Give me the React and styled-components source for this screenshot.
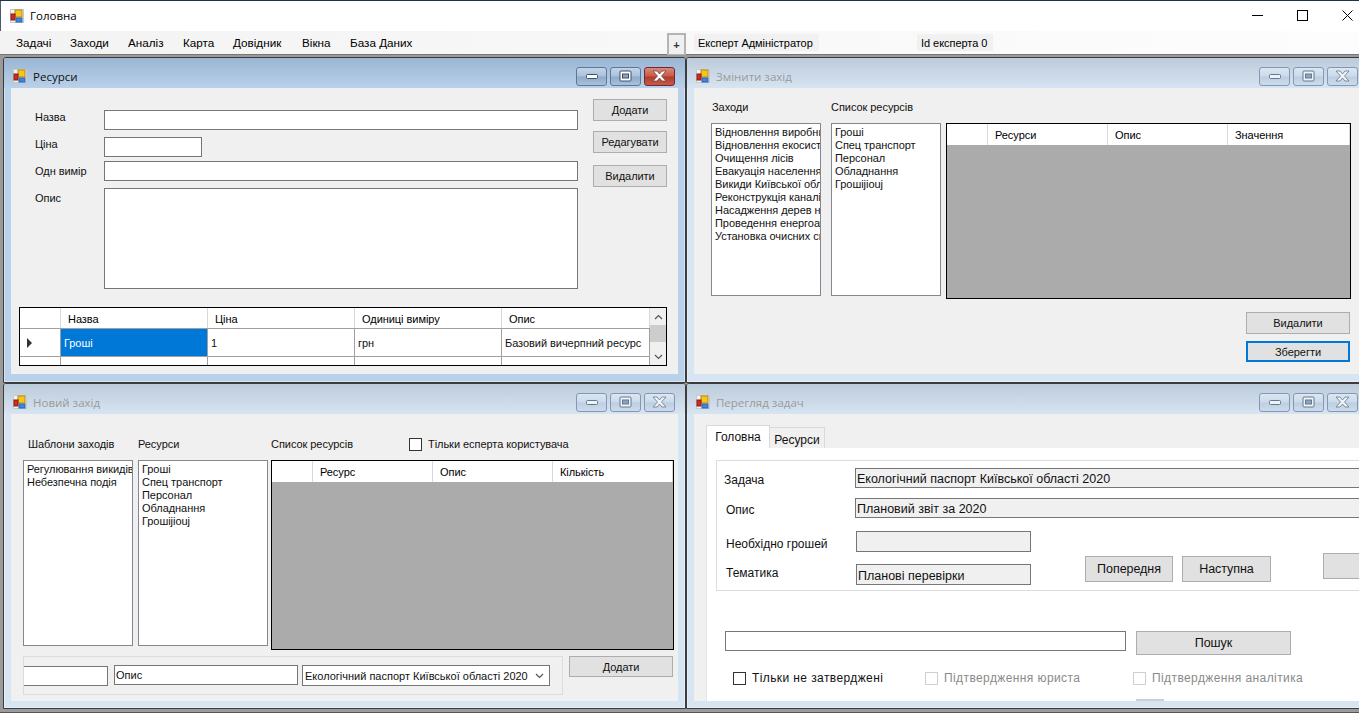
import React from "react";
import styled, { createGlobalStyle } from "styled-components";

const Global = createGlobalStyle`
  html, body { margin: 0; padding: 0; width: 1359px; height: 713px; overflow: hidden; background: #ababab; }
  * { box-sizing: border-box; }
  body { font-family: "Liberation Sans", Arial, sans-serif; font-size: 11px; color: #000; }
`;

const Shell = styled.div`
  width: 1359px; height: 713px; overflow: hidden; display: flex; flex-direction: column;
  border-top: 1px solid #1f3350;
`;
const TitleBar = styled.div`
  height: 30px; background: #fff; display: flex; align-items: center; padding-left: 9px;
  border-left: 1px solid #4a5a70; font-family: "Open Sans", sans-serif; font-size: 11.5px;
`;
const TitleText = styled.span` margin-left: 6px; margin-top: -1px; `;
const SysButtons = styled.div` margin-left: auto; display: flex; margin-right: -11px; margin-top: -2px; `;
const SysButton = styled.div` width: 45px; height: 30px; display: flex; align-items: center; justify-content: center; `;
const MenuBar = styled.div`
  height: 24px; display: flex; align-items: flex-start; padding-left: 16px;
  background: linear-gradient(90deg, #f3f3f3, #fdfdfd); border-bottom: 1px solid #777;
`;
const Menu = styled.div` display: flex; width: 651px; `;
const MenuItem = styled.div`
  width: ${p => p.$w}px; line-height: 24px; font-size: 11.7px; white-space: nowrap;
`;
const PlusButton = styled.div`
  width: 19px; height: 23px; margin-top: 2px; border: 2px solid #b4b4b4; background: #f0f0f0;
  display: flex; align-items: center; justify-content: center; font-size: 11px; font-weight: 700; color: #333;
`;
const StatusLabel = styled.div`
  margin-left: ${p => p.$ml}px; margin-top: 3px; height: 17px; padding: 0 4px; line-height: 18px;
  width: ${p => p.$w}px; background: #f1f1f1; font-size: 11px; letter-spacing: -.05px; white-space: nowrap;
`;
const Desktop = styled.div`
  flex: 1; display: grid; grid-template-columns: 683px 683px; grid-template-rows: 326px 326px;
  padding: 2px 0 0 3px; background: #9a9a9a; align-content: start; overflow: hidden;
  border-bottom: 1px solid #555;
`;
const Win = styled.section`
  display: flex; flex-direction: column; overflow: hidden; border: 1px solid #3c3c3c; border-radius: 3px 3px 0 0;
  background: ${p => (p.$active ? "#b9d1ea" : "#d7e4f2")};
  box-shadow: inset 0 0 0 1px ${p => (p.$active ? "#d5e4f4" : "#e6eef7")};
`;
const WinHead = styled.header`
  height: 30px; flex: none; display: flex; align-items: center; padding: 6px 10px 0 9px;
  background: linear-gradient(180deg, ${p => (p.$active ? "#9ab5d3, #b9d1ea" : "#bccbda, #d7e4f2")});
  font-family: "Open Sans", sans-serif; font-size: 11.5px; color: ${p => (p.$active ? "#111" : "#9a9a9a")};
`;
const WinTitle = styled.span` margin-left: 6px; `;
const WinButtons = styled.div` margin-left: auto; display: flex; gap: 3px; `;
const WinBtn = styled.div`
  width: 31px; height: 19px; border-radius: 3px; display: flex; align-items: center; justify-content: center;
  border: 1px solid ${p => (p.$red ? "#6e2a34" : p.$active ? "#5f7896" : "#8398b4")};
  background: ${p => (p.$red
    ? "linear-gradient(180deg,#d98a78 0,#c65a48 48%,#b03a2a 52%,#c65a4a 100%)"
    : p.$active
      ? "linear-gradient(180deg,#c2d4e8 0,#aac2dc 48%,#8fabc9 52%,#a8c0da 100%)"
      : "linear-gradient(180deg,#dbe6f1 0,#ccdaea 48%,#bccee2 52%,#cddcec 100%)")};
`;
const Client = styled.div`
  margin: 0 7px; height: ${p => p.$h}px; background: #f0f0f0; overflow: hidden;
`;

const Label = styled.div`
  line-height: 14px; font-size: 11px; letter-spacing: -.05px; white-space: nowrap; color: #111;
  margin-left: ${p => p.$ml || 0}px; margin-top: ${p => p.$mt || 0}px; width: ${p => (p.$w ? p.$w + "px" : "auto")};
`;
const TextBox = styled.input`
  display: block; flex: none; width: ${p => p.$w}px; height: ${p => p.$h || 20}px; padding: 1px 1px;
  margin-top: ${p => p.$mt || 0}px; border: 1px solid #767676; border-radius: 0; outline: none;
  background: ${p => (p.$ro ? "#f0f0f0" : "#fff")}; color: #111;
  font-family: "Liberation Sans", sans-serif; font-size: ${p => p.$fs || 11}px;
`;
const ClippedBox = styled(TextBox)` border-left: none; margin-left: -1px; `;
const DescBox = styled(TextBox)` margin-left: 6px; `;
const LoweredBox = styled(TextBox)` padding-top: 3px; `;
const Memo = styled.textarea`
  display: block; flex: none; width: ${p => p.$w}px; height: ${p => p.$h}px; border: 1px solid #767676;
  border-radius: 0; resize: none; background: #fff; outline: none;
`;
const Btn = styled.button`
  display: block; flex: none; width: ${p => p.$w}px; height: ${p => p.$h || 22}px; padding: 0;
  margin-top: ${p => p.$mt || 0}px; margin-left: ${p => p.$ml || 0}px;
  background: #e1e1e1; border: ${p => (p.$focus ? "2px solid #0078d7" : "1px solid #adadad")}; border-radius: 0;
  font-family: "Liberation Sans", sans-serif; font-size: ${p => p.$fs || 11}px; letter-spacing: -.05px; color: #111;
`;

/* grid control */
const Grid = styled.div`
  flex: none; width: ${p => p.$w}px; height: ${p => p.$h}px; border: 1px solid #000;
  background: ${p => p.$bg || "#ababab"}; overflow: hidden; position: relative;
`;
const GridRow = styled.div`
  display: grid; grid-template-columns: ${p => p.$cols}; height: ${p => p.$h}px; background: #fff;
  border-bottom: ${p => (p.$noline ? "none" : "1px solid #a0a0a0")};
`;
const HeadCell = styled.div`
  border-right: 1px solid #d9d9d9; padding-left: 7px; line-height: 22px; font-size: 11px; letter-spacing: -.05px; white-space: nowrap; overflow: hidden;
`;
const Cell = styled.div`
  border-right: 1px solid #a0a0a0; padding-left: 3px; display: flex; align-items: center; font-size: 11px; letter-spacing: -.05px; white-space: nowrap;
  overflow: hidden; background: ${p => (p.$sel ? "#0078d7" : "#fff")}; color: ${p => (p.$sel ? "#fff" : "#111")};
`;
const RowHead = styled.div`
  border-right: 1px solid #a0a0a0; display: flex; align-items: center; padding-left: 7px;
`;
const Arrow = styled.div`
  width: 0; height: 0; border-left: 5px solid #333; border-top: 5px solid transparent; border-bottom: 5px solid transparent;
`;
const ScrollBar = styled.div`
  position: absolute; right: 0; top: 0; bottom: 0; width: 16px; background: #f0f0f0;
  display: flex; flex-direction: column; align-items: center;
`;
const ScrollEnd = styled.div` height: 17px; display: flex; align-items: center; justify-content: center; flex: none; `;
const ScrollThumb = styled.div` width: 16px; height: 17px; background: #cdcdcd; `;
const ScrollFill = styled.div` flex: 1; `;

const ListBox = styled.div`
  flex: none; width: ${p => p.$w}px; height: ${p => p.$h}px; border: 1px solid #828790; background: #fff;
  padding: 2px 0 0 3px; overflow: hidden; font-size: 11px; letter-spacing: -.05px; line-height: 13px; white-space: nowrap; color: #111;
`;
const CheckBox = styled.span`
  display: inline-block; flex: none; width: 13px; height: 13px; background: #fff;
  border: 1px solid ${p => (p.$off ? "#cfcfcf" : "#333")};
`;
const CheckRow = styled.div` display: flex; align-items: center; gap: 6px; `;

/* Resources window */
const ResBody = styled.div` padding: 11px 11px 0 8px; `;
const ResTop = styled.div` display: flex; height: 208px; `;
const Fields = styled.div` width: 559px; padding: 11px 0 0 16px; `;
const FieldRow = styled.div` display: flex; margin-top: ${p => p.$mt || 0}px; `;
const SideButtons = styled.div` margin-left: 15px; width: 74px; `;

/* Edit window */
const EditBody = styled.div` padding: 12px 8px 0 17px; display: flex; flex-direction: column; `;
const Columns = styled.div` display: flex; `;
const Col = styled.div` flex: none; margin-left: ${p => p.$ml || 0}px; `;
const ColHead = styled.div` height: 23px; display: flex; align-items: flex-start; `;
const ActionStack = styled.div` align-self: flex-end; margin-top: 13px; margin-right: 3px; `;

/* New window */
const NewBody = styled.div` padding: 23px 0 0 12px; `;
const BottomRow = styled.div` display: flex; margin-top: 6px; align-items: flex-start; `;
const BottomGroup = styled.div`
  width: 540px; height: 39px; border: 1px solid #dcdcdc; display: flex; align-items: flex-start;
  overflow: hidden; margin-right: 6px;
`;
const Combo = styled.div`
  flex: none; width: 248px; height: 21px; margin: 8px 0 0 4px; border: 1px solid #767676; background: #fff;
  display: flex; align-items: center; justify-content: space-between; padding: 0 5px 0 2px; font-size: 11px; white-space: nowrap; color: #111;
`;

/* Tasks window */
const TaskBody = styled.div` padding: 11px 0 0 12px; height: 100%; display: flex; flex-direction: column; `;
const Tabs = styled.div` display: flex; align-items: flex-end; height: 23px; flex: none; `;
const Tab = styled.div`
  height: ${p => (p.$on ? 23 : 21)}px; width: ${p => p.$w}px; text-align: center; font-size: 12px;
  background: ${p => (p.$on ? "#fff" : "#f0f0f0")}; border: 1px solid #d9d9d9; border-bottom: none;
  border-left: ${p => (p.$on ? "1px solid #d9d9d9" : "none")}; line-height: ${p => (p.$on ? 22 : 24)}px; color: #111;
`;
const TabPage = styled.div`
  flex: 1; background: #fff; padding: 12px 0 0 9px; border-left: 1px solid #e4e4e4; overflow: hidden; font-size: 13px;
`;
const TaskGroup = styled.div`
  height: 131px; width: 700px; border: 1px solid #dcdcdc; padding: 7px 0 0 7px;
`;
const TaskRow = styled.div` display: flex; margin-top: ${p => p.$mt || 0}px; `;
const TaskLabel = styled.div`
  flex: none; width: ${p => p.$w}px; margin-left: ${p => p.$ml || 0}px; margin-top: ${p => p.$mt || 0}px;
  font-size: 12px; line-height: 16px; white-space: nowrap; color: #111;
`;
const TaskLower = styled.div` display: flex; margin-top: 13px; `;
const TaskLeft = styled.div` flex: none; width: 307px; `;
const TaskActions = styled.div` display: flex; margin: 25px 0 0 54px; align-items: flex-start; gap: 9px; `;
const SearchRow = styled.div` display: flex; margin: 40px 0 0 9px; gap: 10px; align-items: flex-start; `;
const ChecksRow = styled.div` display: flex; margin: 15px 0 0 17px; font-size: 12px; height: 16px; align-items: center; `;
const TaskCheck = styled(CheckRow)`
  width: ${p => p.$w}px; color: ${p => (p.$off ? "#8a8a8a" : "#111")}; white-space: nowrap; letter-spacing: .4px;
`;
const CutButton = styled.div` width: 28px; height: 10px; margin: 13px 0 0 420px; background: #cfcfcf; `;

const AppIcon = () => (
  <svg width="14" height="14" viewBox="0 0 14 14" style={{ flex: "none" }}>
    <rect x="0.5" y="0.5" width="13" height="13" fill="#f3f3f3" stroke="#c9c9c9" />
    <rect x="5" y="1" width="7" height="7" fill="#f6c51e" stroke="#b68a10" />
    <rect x="1" y="5" width="4" height="6" fill="#d32a1e" stroke="#8c1c14" />
    <rect x="6" y="9" width="6" height="4" fill="#3f86e0" stroke="#2a62b0" />
  </svg>
);

const WinControls = ({ active }) => {
  const c = active ? "#fff" : "#eef3f8";
  const s = active ? "#3d4f68" : "#66788f";
  return (
    <WinButtons>
      <WinBtn $active={active}>
        <svg width="12" height="7"><rect x=".5" y="1.5" width="11" height="4" rx="1" fill={c} stroke={s} /></svg>
      </WinBtn>
      <WinBtn $active={active}>
        <svg width="13" height="12"><rect x="1" y="1" width="11" height="10" rx="1" fill={c} stroke={s} /><rect x="3.5" y="4" width="6" height="4" fill="#8aa4c4" stroke={s} /></svg>
      </WinBtn>
      <WinBtn $active={active} $red={active}>
        <svg width="17" height="12" viewBox="0 0 17 12">
          <path d="M2 1h4l2.5 3L11 1h4l-4.5 5 4.5 5h-4L8.5 8 6 11H2l4.5-5z" fill={c} stroke={active ? "#6e4a4a" : s} strokeWidth=".8" />
        </svg>
      </WinBtn>
    </WinButtons>
  );
};

const Window = ({ title, active, clientH, children }) => (
  <Win $active={active}>
    <WinHead $active={active}>
      <AppIcon />
      <WinTitle>{title}</WinTitle>
      <WinControls active={active} />
    </WinHead>
    <Client $h={clientH}>{children}</Client>
  </Win>
);

const Chevron = ({ color = "#555", up }) => (
  <svg width="9" height="6" viewBox="0 0 9 6">
    <path d={up ? "M1 5l3.5-3.5L8 5" : "M1 1l3.5 3.5L8 1"} fill="none" stroke={color} strokeWidth="1.2" />
  </svg>
);

const resCols = "41px 147px 147px 147px 148px 1fr";
const activities = ["Відновлення виробниц", "Відновлення екосисте", "Очищення лісів", "Евакуація населення", "Викиди Київської обл", "Реконструкція каналі", "Насадження дерев на", "Проведення енергоау", "Установка очисних сп"];
const resources = ["Гроші", "Спец транспорт", "Персонал", "Обладнання", "Грошіјіоuј"];

const Lines = ({ items }) => items.map(t => <div key={t}>{t}</div>);

const EmptyGrid = ({ w, h, cols, heads }) => (
  <Grid $w={w} $h={h}>
    <GridRow $cols={cols} $h={21} $noline>
      <HeadCell />
      {heads.map(t => <HeadCell key={t}>{t}</HeadCell>)}
    </GridRow>
  </Grid>
);

export default function App() {
  return (
    <Shell>
      <Global />
      <TitleBar>
        <AppIcon />
        <TitleText>Головна</TitleText>
        <SysButtons>
          <SysButton><svg width="11" height="11"><path d="M0 5.5h11" stroke="#000" /></svg></SysButton>
          <SysButton><svg width="11" height="11"><rect x=".5" y=".5" width="10" height="10" fill="none" stroke="#000" /></svg></SysButton>
          <SysButton><svg width="11" height="11"><path d="M.5.5l10 10M10.5.5l-10 10" stroke="#000" /></svg></SysButton>
        </SysButtons>
      </TitleBar>
      <MenuBar>
        <Menu>
          <MenuItem $w={54}>Задачі</MenuItem>
          <MenuItem $w={58}>Заходи</MenuItem>
          <MenuItem $w={55}>Аналіз</MenuItem>
          <MenuItem $w={50}>Карта</MenuItem>
          <MenuItem $w={69}>Довідник</MenuItem>
          <MenuItem $w={48}>Вікна</MenuItem>
          <MenuItem $w={70}>База Даних</MenuItem>
        </Menu>
        <PlusButton>+</PlusButton>
        <StatusLabel $ml={8} $w={125}>Експерт Адміністратор</StatusLabel>
        <StatusLabel $ml={98} $w={76}>Id експерта 0</StatusLabel>
      </MenuBar>
      <Desktop>
        <Window title="Ресурси" active clientH={286}>
          <ResBody>
            <ResTop>
              <Fields>
                <FieldRow><Label $w={69}>Назва</Label><TextBox $w={474} /></FieldRow>
                <FieldRow $mt={7}><Label $w={69}>Ціна</Label><TextBox $w={98} /></FieldRow>
                <FieldRow $mt={4}><Label $w={69} $mt={3}>Одн вимір</Label><TextBox $w={474} /></FieldRow>
                <FieldRow $mt={7}><Label $w={69} $mt={3}>Опис</Label><Memo $w={474} $h={101} /></FieldRow>
              </Fields>
              <SideButtons>
                <Btn $w={74}>Додати</Btn>
                <Btn $w={74} $mt={10}>Редагувати</Btn>
                <Btn $w={74} $mt={12}>Видалити</Btn>
              </SideButtons>
            </ResTop>
            <Grid $w={648} $h={59} $bg="#fff">
              <GridRow $cols={resCols} $h={21}>
                <HeadCell />
                <HeadCell>Назва</HeadCell>
                <HeadCell>Ціна</HeadCell>
                <HeadCell>Одиниці виміру</HeadCell>
                <HeadCell>Опис</HeadCell>
              </GridRow>
              <GridRow $cols={resCols} $h={28}>
                <RowHead><Arrow /></RowHead>
                <Cell $sel>Гроші</Cell>
                <Cell>1</Cell>
                <Cell>грн</Cell>
                <Cell>Базовий вичерпний ресурс</Cell>
              </GridRow>
              <GridRow $cols={resCols} $h={9} $noline>
                <RowHead /><Cell /><Cell /><Cell /><Cell />
              </GridRow>
              <ScrollBar>
                <ScrollEnd><Chevron up /></ScrollEnd>
                <ScrollThumb />
                <ScrollFill />
                <ScrollEnd><Chevron /></ScrollEnd>
              </ScrollBar>
            </Grid>
          </ResBody>
        </Window>

        <Window title="Змінити захід" clientH={286}>
          <EditBody>
            <Columns>
              <Col>
                <ColHead><Label $ml={1}>Заходи</Label></ColHead>
                <ListBox $w={110} $h={173}><Lines items={activities} /></ListBox>
              </Col>
              <Col $ml={10}>
                <ColHead><Label>Список ресурсів</Label></ColHead>
                <ListBox $w={110} $h={173}><Lines items={resources} /></ListBox>
              </Col>
              <Col $ml={5}>
                <ColHead />
                <EmptyGrid w={405} h={176} cols="41px 120px 120px 122px" heads={["Ресурси", "Опис", "Значення"]} />
              </Col>
            </Columns>
            <ActionStack>
              <Btn $w={104}>Видалити</Btn>
              <Btn $w={104} $h={21} $mt={7} $focus>Зберегти</Btn>
            </ActionStack>
          </EditBody>
        </Window>

        <Window title="Новий захід" clientH={287}>
          <NewBody>
            <Columns>
              <Col>
                <ColHead><Label $ml={5}>Шаблони заходів</Label></ColHead>
                <ListBox $w={110} $h={186}><Lines items={["Регулювання викидів", "Небезпечна подія"]} /></ListBox>
              </Col>
              <Col $ml={5}>
                <ColHead><Label>Ресурси</Label></ColHead>
                <ListBox $w={130} $h={186}><Lines items={resources} /></ListBox>
              </Col>
              <Col $ml={3}>
                <ColHead>
                  <Label $w={138}>Список ресурсів</Label>
                  <CheckRow><CheckBox /><Label>Тільки есперта користувача</Label></CheckRow>
                </ColHead>
                <EmptyGrid w={403} h={190} cols="41px 120px 120px 120px" heads={["Ресурс", "Опис", "Кількість"]} />
              </Col>
            </Columns>
            <BottomRow>
              <BottomGroup>
                <ClippedBox $w={85} $mt={9} />
                <DescBox $w={184} $mt={8} defaultValue="Опис" />
                <Combo>Екологічний паспорт Київської області 2020<Chevron /></Combo>
              </BottomGroup>
              <Btn $w={104} $h={21}>Додати</Btn>
            </BottomRow>
          </NewBody>
        </Window>

        <Window title="Перегляд задач" clientH={287}>
          <TaskBody>
            <Tabs>
              <Tab $on $w={64}>Головна</Tab>
              <Tab $w={55}>Ресурси</Tab>
            </Tabs>
            <TabPage>
              <TaskGroup>
                <TaskRow>
                  <TaskLabel $w={131} $mt={4}>Задача</TaskLabel>
                  <LoweredBox $w={520} $ro $fs={12.5} readOnly defaultValue="Екологічний паспорт Київської області 2020" />
                </TaskRow>
                <TaskRow $mt={10}>
                  <TaskLabel $w={129} $ml={2} $mt={4}>Опис</TaskLabel>
                  <LoweredBox $w={520} $ro $fs={12.5} readOnly defaultValue="Плановий звіт за 2020" />
                </TaskRow>
                <TaskLower>
                  <TaskLeft>
                    <TaskRow>
                      <TaskLabel $w={130} $ml={2} $mt={5}>Необхідно грошей</TaskLabel>
                      <TextBox $w={175} $h={21} $ro readOnly />
                    </TaskRow>
                    <TaskRow $mt={12}>
                      <TaskLabel $w={130} $ml={2} $mt={1}>Тематика</TaskLabel>
                      <LoweredBox $w={175} $h={21} $ro $fs={12.5} readOnly defaultValue="Планові перевірки" />
                    </TaskRow>
                  </TaskLeft>
                  <TaskActions>
                    <Btn $w={88} $h={26} $fs={12.5}>Попередня</Btn>
                    <Btn $w={89} $h={26} $fs={12.5}>Наступна</Btn>
                    <Btn $w={60} $h={26} $ml={43} $mt={-3} />
                  </TaskActions>
                </TaskLower>
              </TaskGroup>
              <SearchRow>
                <TextBox $w={401} />
                <Btn $w={155} $h={24} $fs={12.5}>Пошук</Btn>
              </SearchRow>
              <ChecksRow>
                <TaskCheck $w={192}><CheckBox />Тільки не затверджені</TaskCheck>
                <TaskCheck $w={208} $off><CheckBox $off />Підтвердження юриста</TaskCheck>
                <TaskCheck $w={200} $off><CheckBox $off />Підтвердження аналітика</TaskCheck>
              </ChecksRow>
              <CutButton />
            </TabPage>
          </TaskBody>
        </Window>
      </Desktop>
    </Shell>
  );
}
